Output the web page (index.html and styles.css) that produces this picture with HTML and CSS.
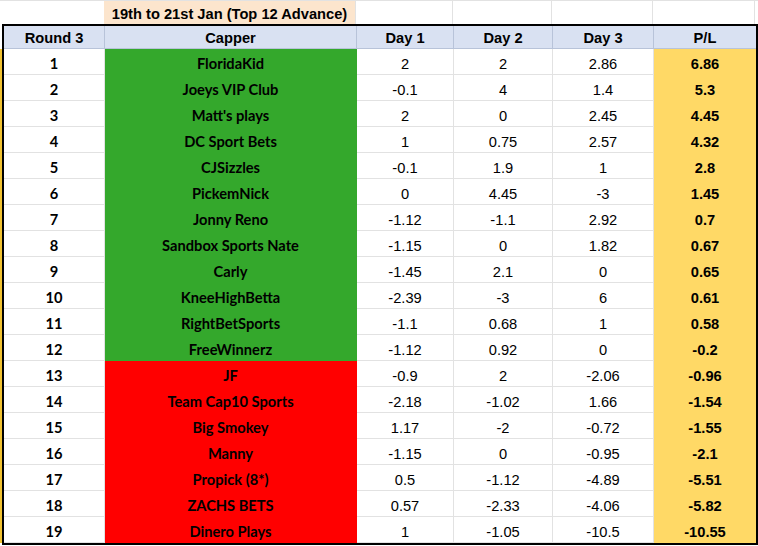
FILE: index.html
```html
<!DOCTYPE html>
<html>
<head>
<meta charset="utf-8">
<link rel="stylesheet" href="styles.css">
</head>
<body>
<div class="sheet">
  <div class="top">
    <div class="tc lead"></div>
    <div class="tc round"></div>
    <div class="tc title">19th to 21st Jan (Top 12 Advance)</div>
    <div class="tc line"></div>
    <div class="tc line"></div>
    <div class="tc line"></div>
    <div class="tc line"></div>
    <div class="tc"></div>
  </div>
  <div class="main">
    <div class="strip"></div>
    <div class="table">
      <div class="row head">
        <div class="c">Round 3</div>
        <div class="c">Capper</div>
        <div class="c">Day 1</div>
        <div class="c">Day 2</div>
        <div class="c">Day 3</div>
        <div class="c">P/L</div>
      </div>
      <div class="row"><div class="c rank">1</div><div class="c name g">FloridaKid</div><div class="c">2</div><div class="c">2</div><div class="c">2.86</div><div class="c pl">6.86</div></div>
      <div class="row"><div class="c rank">2</div><div class="c name g">Joeys VIP Club</div><div class="c">-0.1</div><div class="c">4</div><div class="c">1.4</div><div class="c pl">5.3</div></div>
      <div class="row"><div class="c rank">3</div><div class="c name g">Matt's plays</div><div class="c">2</div><div class="c">0</div><div class="c">2.45</div><div class="c pl">4.45</div></div>
      <div class="row"><div class="c rank">4</div><div class="c name g">DC Sport Bets</div><div class="c">1</div><div class="c">0.75</div><div class="c">2.57</div><div class="c pl">4.32</div></div>
      <div class="row"><div class="c rank">5</div><div class="c name g">CJSizzles</div><div class="c">-0.1</div><div class="c">1.9</div><div class="c">1</div><div class="c pl">2.8</div></div>
      <div class="row"><div class="c rank">6</div><div class="c name g">PickemNick</div><div class="c">0</div><div class="c">4.45</div><div class="c">-3</div><div class="c pl">1.45</div></div>
      <div class="row"><div class="c rank">7</div><div class="c name g">Jonny Reno</div><div class="c">-1.12</div><div class="c">-1.1</div><div class="c">2.92</div><div class="c pl">0.7</div></div>
      <div class="row"><div class="c rank">8</div><div class="c name g">Sandbox Sports Nate</div><div class="c">-1.15</div><div class="c">0</div><div class="c">1.82</div><div class="c pl">0.67</div></div>
      <div class="row"><div class="c rank">9</div><div class="c name g">Carly</div><div class="c">-1.45</div><div class="c">2.1</div><div class="c">0</div><div class="c pl">0.65</div></div>
      <div class="row"><div class="c rank">10</div><div class="c name g">KneeHighBetta</div><div class="c">-2.39</div><div class="c">-3</div><div class="c">6</div><div class="c pl">0.61</div></div>
      <div class="row"><div class="c rank">11</div><div class="c name g">RightBetSports</div><div class="c">-1.1</div><div class="c">0.68</div><div class="c">1</div><div class="c pl">0.58</div></div>
      <div class="row"><div class="c rank">12</div><div class="c name g">FreeWinnerz</div><div class="c">-1.12</div><div class="c">0.92</div><div class="c">0</div><div class="c pl">-0.2</div></div>
      <div class="row"><div class="c rank">13</div><div class="c name r">JF</div><div class="c">-0.9</div><div class="c">2</div><div class="c">-2.06</div><div class="c pl">-0.96</div></div>
      <div class="row"><div class="c rank">14</div><div class="c name r">Team Cap10 Sports</div><div class="c">-2.18</div><div class="c">-1.02</div><div class="c">1.66</div><div class="c pl">-1.54</div></div>
      <div class="row"><div class="c rank">15</div><div class="c name r">Big Smokey</div><div class="c">1.17</div><div class="c">-2</div><div class="c">-0.72</div><div class="c pl">-1.55</div></div>
      <div class="row"><div class="c rank">16</div><div class="c name r">Manny</div><div class="c">-1.15</div><div class="c">0</div><div class="c">-0.95</div><div class="c pl">-2.1</div></div>
      <div class="row"><div class="c rank">17</div><div class="c name r">Propick (8*)</div><div class="c">0.5</div><div class="c">-1.12</div><div class="c">-4.89</div><div class="c pl">-5.51</div></div>
      <div class="row"><div class="c rank">18</div><div class="c name r">ZACHS BETS</div><div class="c">0.57</div><div class="c">-2.33</div><div class="c">-4.06</div><div class="c pl">-5.82</div></div>
      <div class="row"><div class="c rank">19</div><div class="c name r">Dinero Plays</div><div class="c">1</div><div class="c">-1.05</div><div class="c">-10.5</div><div class="c pl">-10.55</div></div>
    </div>
  </div>
</div>
</body>
</html>
```
FILE: styles.css
```css
html, body {
  margin: 0;
  padding: 0;
  background: #ffffff;
}
body {
  width: 758px;
  height: 546px;
  overflow: hidden;
  font-family: "Liberation Sans", Arial, sans-serif;
  font-size: 14.67px;
  color: #000;
}
.top {
  display: grid;
  grid-template-columns: 4px 100px 252px 97px 99px 101px 102px 3px;
  height: 24px;
  border-top: 1px solid #e2e2e2;
  box-sizing: border-box;
}
.tc {
  box-sizing: border-box;
  height: 23px;
}
.tc.line {
  border-right: 1px solid #e2e2e2;
}
.tc.title {
  background: #fce5cd;
  font-weight: bold;
  text-align: center;
  padding-top: 4px;
  line-height: 18px;
  white-space: nowrap;
  border-right: 1px solid #e2e2e2;
}
.main {
  display: flex;
}
.strip {
  width: 2px;
  margin-top: 25px;
  height: 494px;
  background: #f1c232;
}
.table {
  border: 2px solid #000;
  width: 752px;
}
.row {
  display: grid;
  grid-template-columns: 101px 252px 97px 99px 101px 102px;
  height: 26px;
}
.c {
  box-sizing: border-box;
  border-right: 1px solid #e2e2e2;
  border-bottom: 1px solid #e2e2e2;
  text-align: center;
  padding-top: 6px;
  line-height: 18px;
  white-space: nowrap;
  overflow: visible;
}
.c:last-child {
  border-right: none;
}
.row.head {
  height: 23px;
  background: #d9e1f2;
}
.row.head .c {
  padding-top: 3px;
  font-weight: bold;
  border-right-color: #b8c3d9;
  border-bottom-color: #b8c3d9;
}
.rank, .name {
  font-family: Lato, "Liberation Sans", sans-serif;
  font-weight: bold;
  font-size: 14.67px;
}
.name.g {
  background: #34a82c;
  border-color: #34a82c;
}
.name.r {
  background: #ff0000;
  border-color: #ff0000;
}
.pl {
  background: #ffd966;
  border-bottom-color: #ffd966;
  font-weight: bold;
}
```
